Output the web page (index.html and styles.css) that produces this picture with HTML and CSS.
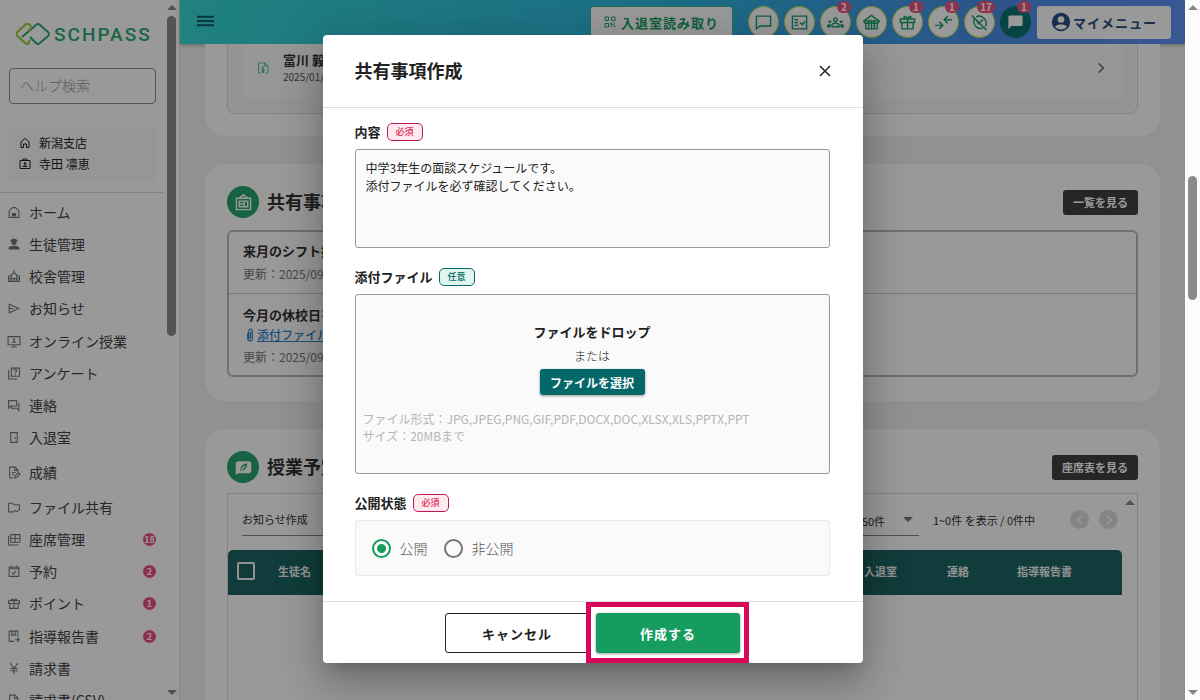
FILE: index.html
```html
<!DOCTYPE html>
<html lang="ja">
<head>
	<meta charset="utf-8">
	<meta name="viewport" content="width=device-width, initial-scale=1">
	<title>SCHPASS</title>
	<link rel="stylesheet" href="styles.css">
</head>
<body>

	<!-- icons -->
	<svg class="sprite" aria-hidden="true">
		<symbol id="i-home" viewBox="0 0 24 24"><path d="M4 21V9.500L12 3l8 6.500V21h-5v-7H9v7z"/></symbol>
		<symbol id="i-house" viewBox="0 0 24 24"><path d="M3 21V9l6-6h6l6 6v12z"/><path class="fill" d="M8 13h8v6H8z"/></symbol>
		<symbol id="i-badge" viewBox="0 0 24 24"><path d="M2 5h20v16H2zM8 5V2h8v3"/><circle class="fill" cx="12" cy="11" r="2.500"/><path class="fill" d="M7 18c0-4 10-4 10 0z"/></symbol>
		<symbol id="i-student" viewBox="0 0 24 24"><path class="fill" d="M12 1l8 3-3 1.500V8a5 5 0 0 1-10 0V5.500L4 4zM2 21v-2c0-6 20-6 20 0v2z"/></symbol>
		<symbol id="i-school" viewBox="0 0 24 24"><path d="M2 21V11h5V9l5-4 5 4v2h5v10zM7 11v10M17 11v10M12 5V0M12 14v7M2 16h20"/></symbol>
		<symbol id="i-send" viewBox="0 0 24 24"><path d="M3 4l18 8-18 8zM3 12h8"/></symbol>
		<symbol id="i-screen" viewBox="0 0 24 24"><path d="M1 3h22v15H1zM7 22h10M12 18v4"/><circle class="fill" cx="12" cy="8" r="2"/><path class="fill" d="M8 14c0-4 8-4 8 0z"/></symbol>
		<symbol id="i-quiz" viewBox="0 0 24 24"><path d="M7 2h15v15H7zM2 6v16h16M12 7c0-3 5-3 5 0 0 2-2.500 2-2.500 4M14.500 13v2"/></symbol>
		<symbol id="i-forum" viewBox="0 0 24 24"><path d="M2 3h15v10H6l-4 4zM21 7v14l-4-4H7v-3"/></symbol>
		<symbol id="i-door" viewBox="0 0 24 24"><path d="M6 3h12v18H6z"/><path class="fill" d="M13.500 11h2.500v3h-2.500z"/></symbol>
		<symbol id="i-grade" viewBox="0 0 24 24"><path d="M10 22H4V2h10l5 5v4M13 2v6h6M8 12h7M8 16h4M13 22l1-4 6-6 3 3-6 6z"/></symbol>
		<symbol id="i-folder" viewBox="0 0 24 24"><path d="M13 20H2V4h7l3 3h10v10M13 17l4 3 5-4"/></symbol>
		<symbol id="i-seat" viewBox="0 0 24 24"><path d="M6 3h17v14H6zM6 10h17M14 3v14M2 5v17h18"/></symbol>
		<symbol id="i-calendar" viewBox="0 0 24 24"><path d="M3 4h18v17H3zM3 7h18M7 1v4M17 1v4M8 14l3 3 5-6"/></symbol>
		<symbol id="i-gift" viewBox="0 0 24 24"><path d="M2 7h20v5H2zM4 12v9h16v-9M12 7v14M12 7C4 7 7 0 12 6c5-6 8 1 0 1"/></symbol>
		<symbol id="i-report" viewBox="0 0 24 24"><path d="M12 21H3V2h16v10M8 2v8l3-2 3 2V2M14 18h8M18 14l4 4-4 4"/></symbol>
		<symbol id="i-yen" viewBox="0 0 24 24"><path d="M5 2l7 10 7-10M12 12v10M5 12h14M5 16h14"/></symbol>
		<symbol id="i-menu" viewBox="0 0 24 16"><path d="M0 2h24M0 8h24M0 14h24"/></symbol>
		<symbol id="i-qr" viewBox="0 0 24 24"><path d="M2 2h7v7H2zM15 2h7v7h-7zM2 15h7v7H2zM13 14h3M19 14h3M16 17h3M13 20h3M19 21h4M14 14v5M21 17v2"/></symbol>
		<symbol id="i-chat" viewBox="0 0 24 24"><path d="M2 3h20v14H7l-5 4z"/></symbol>
		<symbol id="i-chat-fill" viewBox="0 0 24 24"><path class="fill" d="M4 2h16a2 2 0 0 1 2 2v11a2 2 0 0 1-2 2H6l-4 4V4a2 2 0 0 1 2-2z"/></symbol>
		<symbol id="i-check" viewBox="0 0 24 24"><path d="M2 3h20v18H2zM5 8h5M5 12h5M5 16h5M13 12l3 3 4-5"/></symbol>
		<symbol id="i-groups" viewBox="0 0 24 24"><circle cx="12" cy="8" r="2.500"/><path d="M7 18v-2c0-4 10-4 10 0v2z"/><circle class="fill" cx="4" cy="11" r="2"/><circle class="fill" cx="20" cy="11" r="2"/><path class="fill" d="M0 19v-2c0-2 2-3 5-3v5zM24 19v-2c0-2-2-3-5-3v5z"/></symbol>
		<symbol id="i-shop" viewBox="0 0 24 24"><path d="M1 10l11-8 11 8-2 3H3zM2 10h20M8 8v5M12 8v5M16 8v5M4 13v8h16v-8M8 14v7M12 14v7M16 14v7"/></symbol>
		<symbol id="i-arrows" viewBox="0 0 24 24"><path d="M0 16h11M6 11l5 5-5 5M24 8H13M18 3l-5 5 5 5"/></symbol>
		<symbol id="i-off" viewBox="0 0 24 24"><path d="M7 4a10 10 0 0 1 13 14M17 20A10 10 0 0 1 5 6M1 2l21 21M8 10l4 5M12 12l5-4"/></symbol>
		<symbol id="i-user" viewBox="0 0 24 24"><path class="fill" fill-rule="evenodd" d="M12 1a11 11 0 1 0 0 22 11 11 0 0 0 0-22zm0 4a4 4 0 1 1 0 8 4 4 0 0 1 0-8zm0 10c4 0 7 1.500 7 3-3 4-11 4-14 0 0-1.500 3-3 7-3z"/></symbol>
		<symbol id="i-doc" viewBox="0 0 24 24"><path d="M8 22H3V2h13l6 6v14h-5M15 2v6h6"/><circle class="fill" cx="12" cy="10" r="2"/><path class="fill" d="M9 13h6l-1 9h-4z"/></symbol>
		<symbol id="i-board" viewBox="0 0 24 24"><path d="M2 6h20v16H2zM6 6l6-5 6 5M6 10h12v8H6zM6 14h7M13 10v8"/></symbol>
		<symbol id="i-lesson" viewBox="0 0 24 24"><path class="fill" fill-rule="evenodd" d="M5 3h14a4 4 0 0 1 4 4v10a3 3 0 0 1-3 3H6l-5 2V7a4 4 0 0 1 4-4zm12 3c-5 1-8 3-9 7l-1 4 3-1c5 0 7-5 7-10z"/><path d="M9 15l5-5"/></symbol>
		<symbol id="i-clip" viewBox="0 0 12 24"><path d="M2 8v10a4 4 0 0 0 8 0V5a3 3 0 0 0-6 0v12a2 2 0 0 0 3 0V7"/></symbol>
		<symbol id="i-right" viewBox="0 0 24 24"><path d="M8 4l8 8-8 8"/></symbol>
		<symbol id="i-left" viewBox="0 0 24 24"><path d="M15 4l-8 8 8 8"/></symbol>
		<symbol id="i-close" viewBox="0 0 24 24"><path d="M2 2l20 20M22 2L2 22"/></symbol>
	</svg>

	<div class="app">
		<aside class="sidebar">
			<div class="sidebar-inner">
				<a class="logo" href="#">
					<svg class="logo-mark" viewBox="0 0 34 22" aria-hidden="true">
						<path d="M14 2l-2-1q-1-1-2 0L1 9.500q-1 1.500 0 3L9 20q2 2 4 0" stroke="#9ccc32"/>
						<path d="M14 1l1 3M14 17l-2 4" stroke="#9ccc32"/>
						<path d="M6 14L20 2q2-2 4 0l8 7q2 2 0 4l-8 7q-2 2-4 0l-6-6" stroke="#2bab76"/>
						<path d="M12 8l3-3" stroke="#9ccc32"/>
					</svg>
					<span>SCHPASS</span>
				</a>
				<input class="help-search" type="text" placeholder="ヘルプ検索" aria-label="ヘルプ検索">
				<div class="account">
					<p><svg class="icon"><use href="#i-home"/></svg>新潟支店</p>
					<p><svg class="icon"><use href="#i-badge"/></svg>寺田 凛恵</p>
				</div>
				<nav class="menu">
					<ul class="menu-group">
						<li><a href="#"><svg class="icon"><use href="#i-house"/></svg>ホーム</a></li>
						<li><a href="#"><svg class="icon"><use href="#i-student"/></svg>生徒管理</a></li>
						<li><a href="#"><svg class="icon"><use href="#i-school"/></svg>校舎管理</a></li>
						<li><a href="#"><svg class="icon"><use href="#i-send"/></svg>お知らせ</a></li>
					</ul>
					<ul class="menu-group">
						<li><a href="#"><svg class="icon"><use href="#i-screen"/></svg>オンライン授業</a></li>
						<li><a href="#"><svg class="icon"><use href="#i-quiz"/></svg>アンケート</a></li>
						<li><a href="#"><svg class="icon"><use href="#i-forum"/></svg>連絡</a></li>
						<li><a href="#"><svg class="icon"><use href="#i-door"/></svg>入退室</a></li>
					</ul>
					<ul class="menu-group spaced">
						<li><a href="#"><svg class="icon"><use href="#i-grade"/></svg>成績</a></li>
					</ul>
					<ul class="menu-group spaced">
						<li><a href="#"><svg class="icon"><use href="#i-folder"/></svg>ファイル共有</a></li>
						<li><a href="#"><svg class="icon"><use href="#i-seat"/></svg>座席管理<span class="count">18</span></a></li>
						<li><a href="#"><svg class="icon"><use href="#i-calendar"/></svg>予約<span class="count">2</span></a></li>
						<li><a href="#"><svg class="icon"><use href="#i-gift"/></svg>ポイント<span class="count">1</span></a></li>
					</ul>
					<ul class="menu-group">
						<li><a href="#"><svg class="icon"><use href="#i-report"/></svg>指導報告書<span class="count">2</span></a></li>
						<li><a href="#"><svg class="icon"><use href="#i-yen"/></svg>請求書</a></li>
						<li><a href="#"><svg class="icon"><use href="#i-grade"/></svg>請求書(CSV)</a></li>
					</ul>
				</nav>
			</div>
			<div class="scrollbar side-scroll">
				<span class="arrow up"></span>
				<span class="thumb"></span>
				<span class="arrow down"></span>
			</div>
		</aside>

		<div class="main">
			<header class="topbar">
				<button class="hamburger" type="button" aria-label="メニュー"><svg class="icon"><use href="#i-menu"/></svg></button>
				<button class="top-button qr" type="button"><svg class="icon"><use href="#i-qr"/></svg>入退室読み取り</button>
				<div class="shortcuts">
					<button class="round" type="button" aria-label="チャット"><svg class="icon"><use href="#i-chat"/></svg></button>
					<button class="round" type="button" aria-label="タスク"><svg class="icon"><use href="#i-check"/></svg></button>
					<button class="round" type="button" aria-label="面談"><svg class="icon"><use href="#i-groups"/></svg><span class="badge">2</span></button>
					<button class="round" type="button" aria-label="教室"><svg class="icon"><use href="#i-shop"/></svg></button>
					<button class="round" type="button" aria-label="ポイント"><svg class="icon"><use href="#i-gift"/></svg><span class="badge">1</span></button>
					<button class="round" type="button" aria-label="振替"><svg class="icon"><use href="#i-arrows"/></svg><span class="badge">1</span></button>
					<button class="round" type="button" aria-label="未対応"><svg class="icon"><use href="#i-off"/></svg><span class="badge">17</span></button>
					<button class="round dark" type="button" aria-label="メッセージ"><svg class="icon"><use href="#i-chat-fill"/></svg><span class="badge">1</span></button>
				</div>
				<button class="top-button mypage" type="button"><svg class="icon"><use href="#i-user"/></svg>マイメニュー</button>
			</header>

			<div class="content">
				<section class="card card-first">
					<div class="inset">
						<a class="person" href="#">
							<svg class="icon doc"><use href="#i-doc"/></svg>
							<span class="person-text"><b>富川 毅</b><small>2025/01/</small></span>
							<svg class="icon next"><use href="#i-right"/></svg>
						</a>
					</div>
				</section>

				<section class="card">
					<div class="card-head">
						<span class="card-icon"><svg class="icon"><use href="#i-board"/></svg></span>
						<h2>共有事項</h2>
						<button class="black-button" type="button">一覧を見る</button>
					</div>
					<ul class="notices">
						<li>
							<h3>来月のシフト提出</h3>
							<p>更新：2025/09</p>
						</li>
						<li>
							<h3>今月の休校日を</h3>
							<a href="#"><svg class="icon"><use href="#i-clip"/></svg><span>添付ファイル</span></a>
							<p>更新：2025/09</p>
						</li>
					</ul>
				</section>

				<section class="card card-last">
					<div class="card-head">
						<span class="card-icon"><svg class="icon"><use href="#i-lesson"/></svg></span>
						<h2>授業予定</h2>
						<button class="black-button" type="button">座席表を見る</button>
					</div>
					<div class="schedule">
						<div class="schedule-main">
							<div class="tools">
								<select class="action" aria-label="操作"><option>お知らせ作成</option></select>
								<span class="per-page">
									<select aria-label="表示件数"><option>50件</option></select>
								</span>
								<span class="range">1~0件 を表示 / 0件中</span>
								<button class="pager" type="button" disabled aria-label="前へ"><svg class="icon"><use href="#i-left"/></svg></button>
								<button class="pager" type="button" disabled aria-label="次へ"><svg class="icon"><use href="#i-right"/></svg></button>
							</div>
							<table>
								<colgroup>
									<col class="c-check">
									<col>
									<col class="c-entry">
									<col class="c-contact">
									<col class="c-report">
								</colgroup>
								<thead>
									<tr>
										<th><input type="checkbox" aria-label="すべて選択"></th>
										<th>生徒名</th>
										<th>入退室</th>
										<th>連絡</th>
										<th>指導報告書</th>
									</tr>
								</thead>
							</table>
						</div>
						<div class="scrollbar"><span class="arrow up"></span></div>
					</div>
				</section>
			</div>
		</div>

		<div class="backdrop">
			<form class="modal" role="dialog" aria-labelledby="modal-title">
				<div class="modal-head">
					<h1 id="modal-title">共有事項作成</h1>
					<button class="close" type="button" aria-label="閉じる"><svg class="icon"><use href="#i-close"/></svg></button>
				</div>
				<div class="modal-body">
					<div class="field">
						<div class="field-label"><label for="body">内容</label><span class="tag required">必須</span></div>
						<textarea id="body">中学3年生の面談スケジュールです。
添付ファイルを必ず確認してください。</textarea>
					</div>
					<div class="field">
						<div class="field-label"><span>添付ファイル</span><span class="tag optional">任意</span></div>
						<div class="dropzone">
							<strong>ファイルをドロップ</strong>
							<span class="or">または</span>
							<button class="pick" type="button">ファイルを選択</button>
							<p>ファイル形式：JPG,JPEG,PNG,GIF,PDF,DOCX,DOC,XLSX,XLS,PPTX,PPT<br>サイズ：20MBまで</p>
						</div>
					</div>
					<div class="field">
						<div class="field-label"><span>公開状態</span><span class="tag required">必須</span></div>
						<div class="radios">
							<label><input type="radio" name="state" checked>公開</label>
							<label><input type="radio" name="state">非公開</label>
						</div>
					</div>
				</div>
				<div class="modal-foot">
					<button class="cancel" type="button">キャンセル</button>
					<div class="highlight"><button class="submit" type="submit">作成する</button></div>
				</div>
			</form>
		</div>
	</div>

	<div class="scrollbar page-scroll">
		<span class="arrow up"></span>
		<span class="thumb"></span>
		<span class="arrow down"></span>
	</div>

</body>
</html>
```

FILE: styles.css
```css
* {
	box-sizing: border-box;
}

body {
	display: flex;
	height: 100vh;
	margin: 0;
	overflow: hidden;
	color: #333;
	font-family: "Noto Sans CJK JP", "Noto Sans", sans-serif;
	font-size: 12px;
}

h1, h2, h3, p, ul {
	margin: 0;
	padding: 0;
}

ul {
	list-style: none;
}

a {
	color: inherit;
	text-decoration: none;
}

button, input, select, textarea {
	font-family: inherit;
	color: inherit;
	margin: 0;
}

button {
	padding: 0;
	border: 0;
	background: none;
	cursor: pointer;
}

.sprite {
	position: absolute;
	width: 0;
	height: 0;
}

.icon {
	flex: none;
	width: 14px;
	height: 14px;
	fill: none;
	stroke: currentColor;
	stroke-width: 2;
}

.icon .fill, .fill {
	fill: currentColor;
	stroke: none;
}

.app {
	position: relative;
	display: flex;
	flex: 1;
	min-width: 0;
	overflow: hidden;
}

/* scrollbars */
.scrollbar {
	display: flex;
	flex: none;
	flex-direction: column;
	align-items: center;
	width: 15px;
	padding: 5px 0;
}

.arrow {
	border: 5px solid transparent;
}

.arrow.up {
	border-top: 0;
	border-bottom-color: #888;
}

.arrow.down {
	margin-top: auto;
	border-bottom: 0;
	border-top-color: #888;
}

.thumb {
	width: 9px;
	border-radius: 5px;
	background: #8b8b8b;
}

.page-scroll {
	background: #fcfcfc;
}

.page-scroll .thumb {
	height: 124px;
	margin-top: 166px;
}

.side-scroll .thumb {
	height: 320px;
	margin-top: 6px;
}

/* sidebar */
.sidebar {
	display: flex;
	flex: none;
	width: 180px;
	background: #fff;
	border-right: 1px solid #e4e4e4;
}

.sidebar-inner {
	flex: 1;
	min-width: 0;
	overflow: hidden;
}

.logo {
	display: flex;
	align-items: center;
	gap: 4px;
	height: 32px;
	margin: 18px 0 18px 16px;
	color: #2bab76;
	font-family: Roboto, sans-serif;
	font-size: 19px;
	font-weight: 500;
	letter-spacing: 2px;
}

.logo-mark {
	width: 34px;
	height: 22px;
	fill: none;
	stroke-width: 2;
}

.help-search {
	display: block;
	width: 147px;
	height: 36px;
	margin-left: 9px;
	padding: 0 10px 2px;
	border: 1px solid #8c8c8c;
	border-radius: 4px;
	background: #fff;
	font-size: 14px;
}

.help-search::placeholder {
	color: #999;
	font-weight: 300;
}

.account {
	margin: 23px 8px 10px;
	padding: 5px 11px 8px;
	background: #fafafa;
	color: #222;
	line-height: 21px;
}

.account p {
	display: flex;
	align-items: center;
	gap: 8px;
}

.account .icon {
	width: 12px;
	height: 12px;
}

.menu {
	padding-top: 2px;
	border-top: 1px solid #ddd;
}

.menu-group {
	margin-top: 1px;
}

.menu-group.spaced {
	margin-top: 3px;
}

.menu a {
	display: flex;
	align-items: center;
	gap: 8px;
	height: 32px;
	padding: 0 8px 0 7px;
	color: #444;
	font-size: 14px;
}

.menu .icon {
	width: 14px;
	height: 13px;
	color: #777;
}

.menu .count {
	width: 13px;
	height: 13px;
	margin-left: auto;
	border-radius: 50%;
	background: #e8527f;
	color: #fff;
	font-size: 9px;
	font-weight: 700;
	line-height: 13px;
	text-align: center;
}

/* top bar */
.main {
	display: flex;
	flex: 1;
	flex-direction: column;
	min-width: 0;
	background: #eff3ee;
}

.topbar {
	display: flex;
	flex: none;
	align-items: center;
	height: 44px;
	padding: 0 14px 0 17px;
	background: linear-gradient(100deg, #36d9d4, #2fb4e0 50%, #4a8de6 80%, #5f93f5);
	box-shadow: 0 1px 4px rgba(0, 0, 0, .3);
}

.hamburger {
	margin-right: auto;
	color: #0c5c66;
}

.hamburger .icon {
	display: block;
	width: 17px;
	height: 12px;
	margin-bottom: 3px;
	stroke-width: 3;
}

.top-button {
	display: flex;
	align-items: center;
	justify-content: center;
	height: 33px;
	border-radius: 3px;
	background: #fff;
	font-size: 13px;
	font-weight: 700;
	letter-spacing: 1px;
}

.qr {
	gap: 5px;
	width: 143px;
	border: 1px solid #35b98c;
	color: #1a9f68;
}

.qr .icon {
	width: 12px;
	height: 12px;
}

.shortcuts {
	display: flex;
	gap: 5px;
	margin-left: 8px;
	padding: 0 6px;
	border-left: 1px solid #3a9fd0;
}

.round {
	position: relative;
	display: flex;
	align-items: center;
	justify-content: center;
	width: 31px;
	height: 32px;
	border: 1px solid #b5dc5a;
	border-radius: 50%;
	background: #fff;
	color: #1a9f68;
}

.round .icon {
	width: 17px;
	height: 17px;
}

.round.dark {
	border-color: #0a7470;
	background: #0a7470;
	color: #fff;
}

.badge {
	position: absolute;
	top: -6px;
	right: -1px;
	min-width: 14px;
	padding: 0 3px;
	border-radius: 6px;
	background: #f0527f;
	color: #fff;
	font-size: 10px;
	font-weight: 700;
	line-height: 12px;
}

.mypage {
	gap: 2px;
	width: 134px;
	color: #2b4f80;
}

.mypage .icon {
	width: 20px;
	height: 20px;
}

/* cards */
.content {
	display: flex;
	flex: 1;
	flex-direction: column;
	gap: 28px;
	min-height: 0;
	padding: 0 25px;
	overflow: hidden;
}

.card {
	flex: none;
	padding: 22px 22px 24px;
	border-radius: 20px;
	background: #fff;
}

.card-first {
	padding-top: 0;
	padding-bottom: 22px;
	border-radius: 0 0 20px 20px;
}

.card-last {
	display: flex;
	flex: 1;
	flex-direction: column;
	padding-bottom: 0;
	border-radius: 20px 20px 0 0;
}

.inset {
	padding: 0 15px 15px;
	border: 1px solid #ddd;
	border-top: 0;
	border-radius: 0 0 8px 8px;
	background: #f7f7f7;
}

.person {
	display: flex;
	align-items: center;
	height: 54px;
	padding: 0 14px 7px;
	background: #fcfcfc;
}

.person .doc {
	width: 12px;
	height: 12px;
	color: #5dbd95;
}

.person-text {
	display: flex;
	flex: 1;
	flex-direction: column;
	margin-left: 14px;
	line-height: 17px;
}

.person-text b {
	font-size: 13px;
}

.person-text small {
	color: #555;
	font-size: 10px;
}

.person .next {
	stroke-width: 3;
	color: #777;
}

.card-head {
	display: flex;
	align-items: center;
	gap: 8px;
	height: 32px;
}

.card-head h2 {
	flex: 1;
	padding-bottom: 2px;
	font-size: 18px;
	font-weight: 700;
}

.card-icon {
	display: flex;
	align-items: center;
	justify-content: center;
	width: 32px;
	height: 32px;
	border-radius: 50%;
	background: #25a46e;
	color: #fff;
}

.card-icon .icon {
	width: 17px;
	height: 17px;
}

.black-button {
	height: 25px;
	padding: 0 10px;
	border-radius: 3px;
	background: #404040;
	color: #fff;
	font-size: 11px;
	font-weight: 700;
}

.notices {
	margin-top: 12px;
	border: 2px solid #bbb;
	border-radius: 6px;
}

.notices li {
	padding: 8px 14px 7px;
}

.notices li + li {
	padding-top: 10px;
	padding-bottom: 6px;
	border-top: 1px solid #ccc;
}

.notices h3 {
	font-size: 13px;
	line-height: 22px;
}

.notices p {
	color: #777;
	line-height: 24px;
}

.notices a {
	display: flex;
	align-items: center;
	gap: 3px;
	height: 19px;
	padding-left: 3px;
	padding-bottom: 2px;
	color: #2c82c9;
	font-weight: 500;
}

.notices a span {
	text-decoration: underline;
}

.notices .icon {
	width: 8px;
	height: 14px;
}

/* schedule */
.schedule {
	display: flex;
	flex: 1;
	margin-top: 10px;
	border: 1px solid #ddd;
	border-bottom: 0;
}

.schedule .scrollbar {
	padding-top: 6px;
}

.schedule-main {
	flex: 1;
	min-width: 0;
}

.tools {
	display: flex;
	align-items: center;
	height: 56px;
	padding: 0 4px 5px 14px;
	font-size: 11px;
}

.tools select {
	appearance: none;
	height: 32px;
	padding: 0;
	border: 0;
	border-bottom: 1px solid #888;
	border-radius: 0;
	background: none;
	font-size: 11px;
}

.tools .action {
	width: 180px;
	margin-right: auto;
}

.per-page {
	position: relative;
	margin-right: 14px;
}

.per-page select {
	width: 62px;
	padding-top: 4px;
	padding-left: 5px;
}

.per-page::after {
	content: "";
	position: absolute;
	top: 13px;
	right: 6px;
	border: 5px solid transparent;
	border-top-color: #777;
	border-bottom: 0;
}

.range {
	margin-right: 35px;
}

.pager {
	display: flex;
	align-items: center;
	justify-content: center;
	width: 19px;
	height: 19px;
	margin-right: 10px;
	border-radius: 50%;
	background: #ddd;
	color: #fff;
}

.pager:last-child {
	margin-right: 0;
}

.pager .icon {
	width: 12px;
	height: 12px;
	stroke-width: 3;
}

.schedule table {
	width: 100%;
	table-layout: fixed;
	border-spacing: 0;
}

.c-check {
	width: 50px;
}

.c-entry {
	width: 83px;
}

.c-contact {
	width: 70px;
}

.c-report {
	width: 105px;
}

.schedule th {
	height: 45px;
	padding: 0 0 3px;
	background: #1c6763;
	color: #f3f3f3;
	font-size: 11px;
	text-align: left;
	vertical-align: middle;
}

.schedule th:first-child {
	padding-left: 9px;
	border-top-left-radius: 5px;
}

.schedule th:last-child {
	border-top-right-radius: 5px;
}

.schedule th input {
	display: block;
	appearance: none;
	width: 18px;
	height: 18px;
	border: 2px solid #f3f3f3;
	border-radius: 2px;
}

/* modal */
.backdrop {
	position: absolute;
	inset: 0;
	display: flex;
	align-items: center;
	justify-content: center;
	padding-bottom: 2px;
	background: rgba(0, 0, 0, .4);
}

.modal {
	width: 540px;
	max-width: 90%;
	border-radius: 4px;
	background: #fff;
	color: #222;
	box-shadow: 0 11px 15px -7px rgba(0, 0, 0, .2), 0 24px 38px 3px rgba(0, 0, 0, .14), 0 9px 46px 8px rgba(0, 0, 0, .12);
}

.modal-head {
	display: flex;
	align-items: center;
	justify-content: space-between;
	height: 73px;
	padding: 0 32px;
	border-bottom: 1px solid #ddd;
}

.modal-head h1 {
	padding-bottom: 2px;
	font-size: 18px;
	font-weight: 700;
}

.close .icon {
	display: block;
	width: 12px;
	height: 12px;
	stroke-width: 3;
}

.modal-body {
	display: flex;
	flex-direction: column;
	gap: 20px;
	padding: 15px 33px 25px 32px;
}

.field-label {
	display: flex;
	align-items: center;
	gap: 6px;
	height: 18px;
	margin-bottom: 8px;
	font-size: 13px;
	font-weight: 700;
	line-height: 18px;
}

.tag {
	width: 36px;
	height: 18px;
	border: 1px solid;
	border-radius: 5px;
	font-size: 9px;
	font-weight: 500;
	line-height: 16px;
	text-align: center;
}

.required {
	border-color: #c2185b;
	background: #ffebee;
	color: #e01e5a;
}

.optional {
	border-color: #046868;
	background: #e0f5ee;
	color: #046868;
}

textarea {
	display: block;
	width: 100%;
	height: 99px;
	padding: 9px 10px;
	border: 1px solid #999;
	border-radius: 3px;
	background: #fafafa;
	font-size: 12px;
	line-height: 18px;
	resize: none;
}

.dropzone {
	display: flex;
	flex-direction: column;
	align-items: center;
	height: 180px;
	padding: 25px 7px 0;
	border: 1px solid #999;
	border-radius: 3px;
	background: #fafafa;
	line-height: 24px;
}

.dropzone strong {
	font-size: 13px;
}

.or {
	font-weight: 300;
}

.pick {
	width: 105px;
	height: 26px;
	margin-top: 1px;
	border-radius: 3px;
	background: #046868;
	color: #fff;
	font-size: 12px;
	font-weight: 700;
	box-shadow: 0 1px 3px rgba(0, 0, 0, .4);
}

.dropzone p {
	align-self: stretch;
	margin-top: 15px;
	color: #b5b5b5;
	line-height: 17px;
}

.radios {
	display: flex;
	align-items: center;
	gap: 16px;
	height: 56px;
	padding: 0 16px;
	border: 1px solid #e8e8e8;
	border-radius: 3px;
	background: #fafafa;
	color: #555;
	font-size: 14px;
	font-weight: 300;
}

.radios label {
	display: flex;
	align-items: center;
	gap: 9px;
}

.radios input {
	appearance: none;
	width: 19px;
	height: 19px;
	border: 2px solid #777;
	border-radius: 50%;
}

.radios input:checked {
	border-color: #179c5f;
	background: radial-gradient(circle, #179c5f 4px, transparent 5px);
}

.modal-foot {
	display: flex;
	justify-content: center;
	gap: 7px;
	padding: 11px 0 10px;
	border-top: 1px solid #ddd;
}

.modal-foot button {
	display: block;
	width: 144px;
	height: 40px;
	border-radius: 3px;
	font-size: 13px;
	font-weight: 700;
	letter-spacing: 1px;
}

.modal-foot .cancel {
	border: 1px solid #222;
}

.modal-foot .submit {
	background: #179c5f;
	color: #fff;
	box-shadow: 0 1px 3px rgba(0, 0, 0, .4);
}

.highlight {
	position: relative;
}

.highlight::after {
	content: "";
	position: absolute;
	inset: -11px -9px -10px -10px;
	border: 5px solid #d9075a;
	pointer-events: none;
}
```
